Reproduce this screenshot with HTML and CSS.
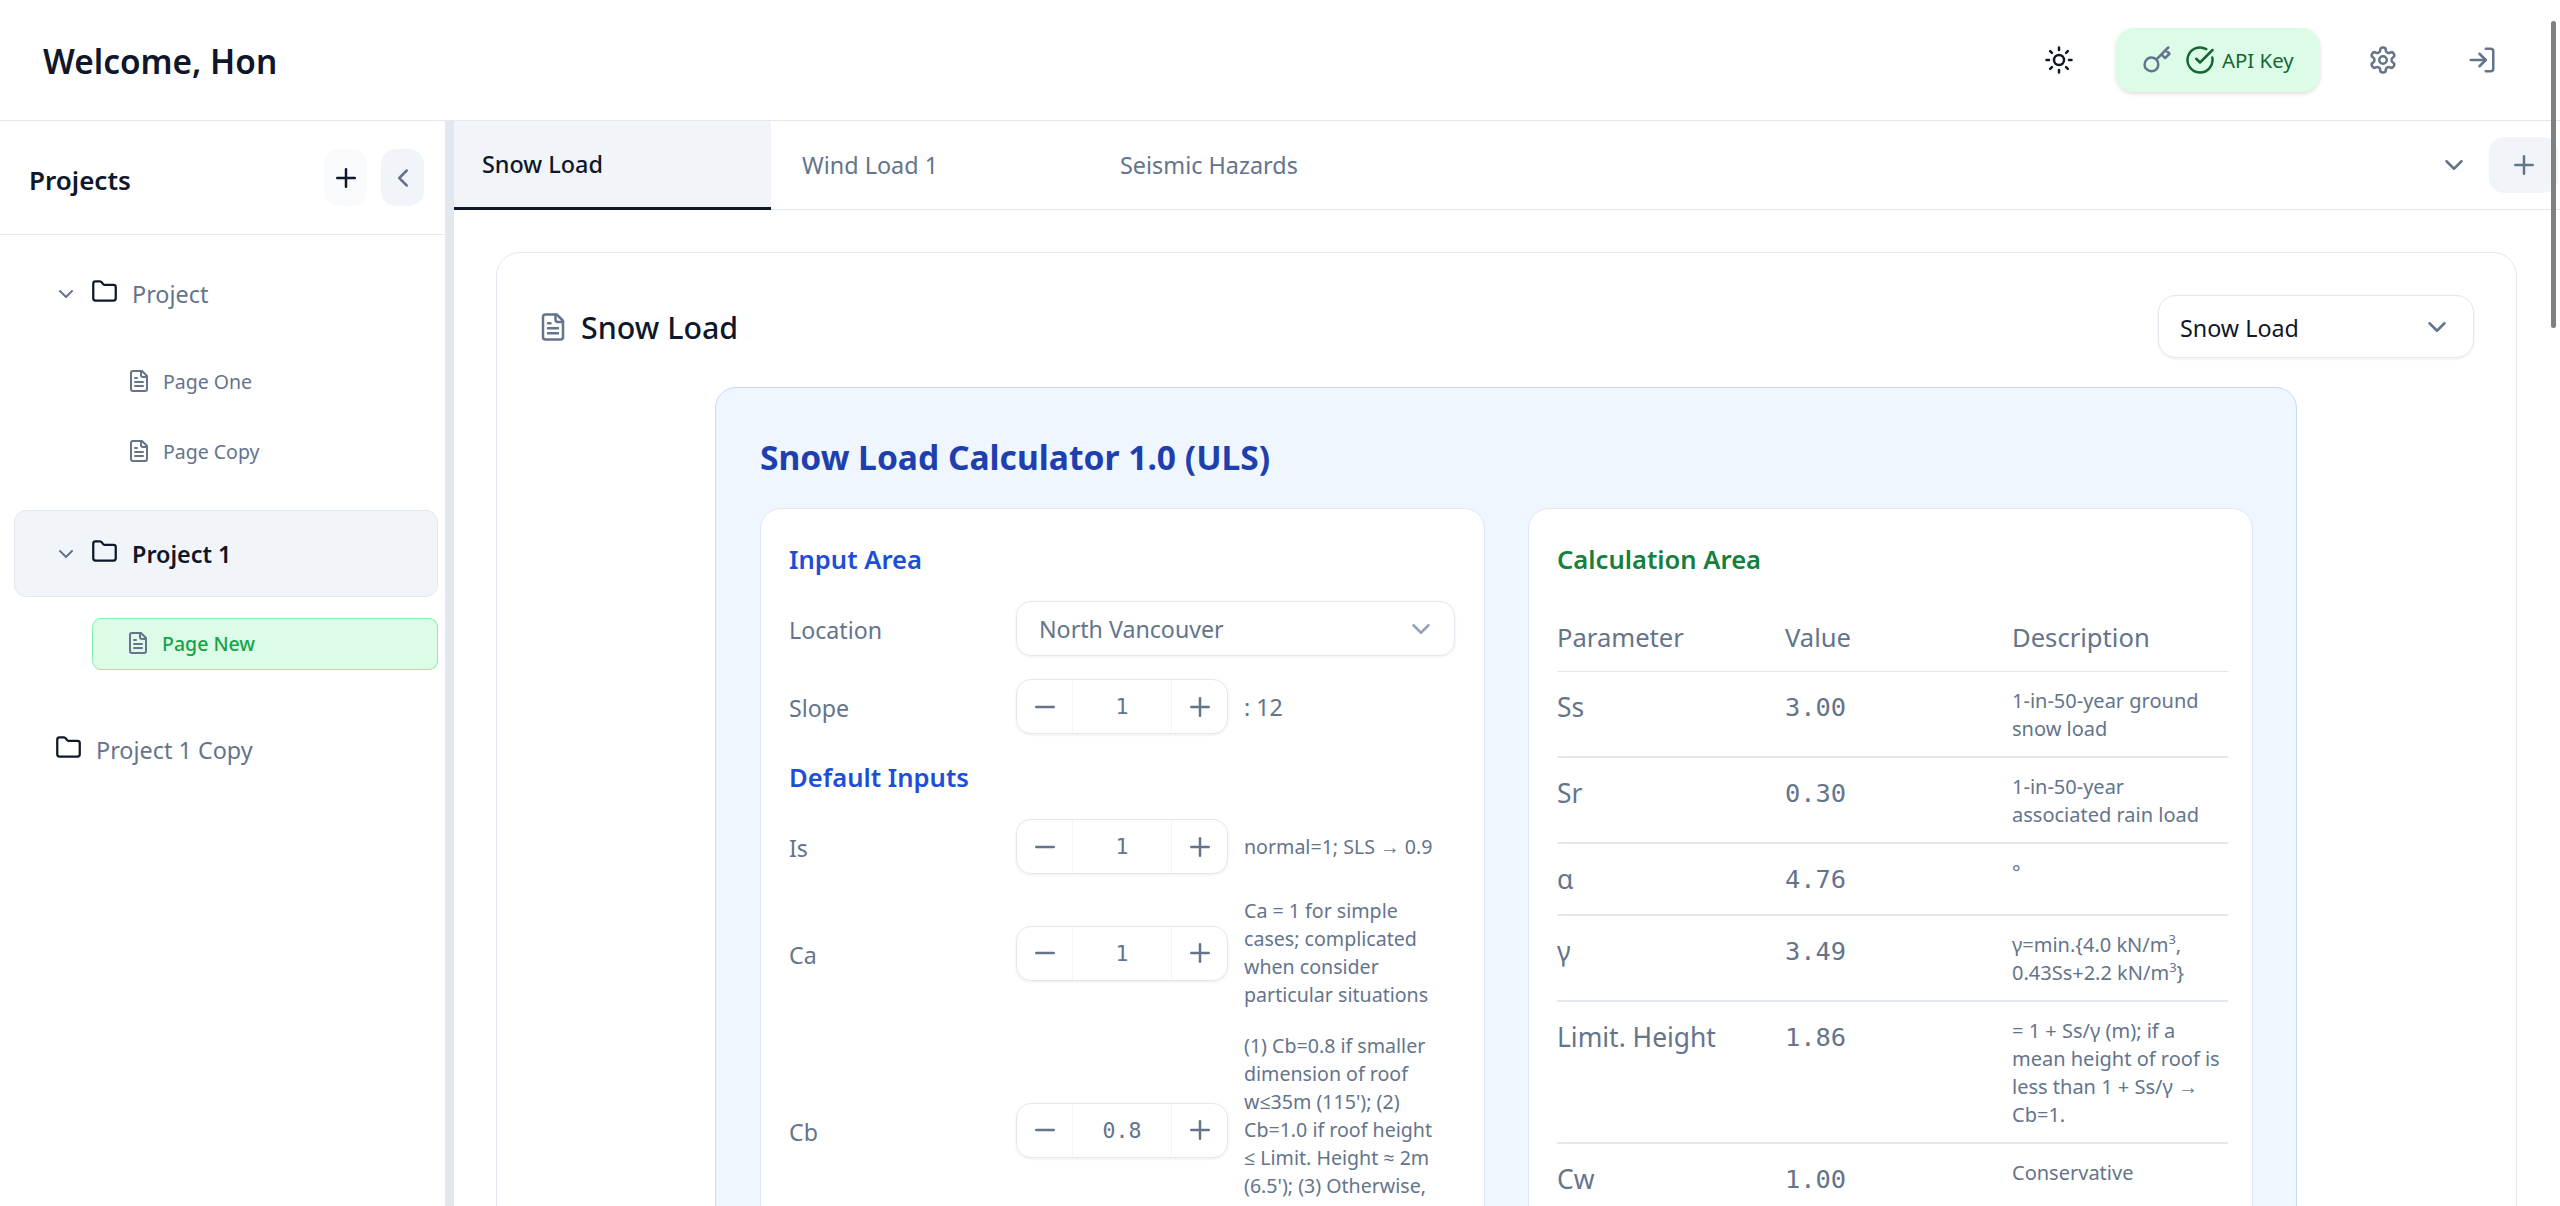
FILE: index.html
```html
<!DOCTYPE html>
<html lang="en">
<head>
    <meta charset="UTF-8">
    <meta name="viewport" content="width=device-width, initial-scale=1.0">
    <title>Snow Load</title>
    <link rel="stylesheet" href="styles.css">
</head>
<body>
    <svg class="sprite" xmlns="http://www.w3.org/2000/svg">
        <symbol id="i-sun" viewBox="0 0 24 24"><circle cx="12" cy="12" r="4"/><path d="M12 2v2M12 20v2M4.93 4.93l1.41 1.41M17.66 17.66l1.41 1.41M2 12h2M20 12h2M6.34 17.66l-1.41 1.41M19.07 4.93l-1.41 1.41"/></symbol>
        <symbol id="i-key" viewBox="0 0 24 24"><path d="m21 2-2 2m-7.61 7.61a5.5 5.5 0 1 1-7.778 7.778 5.5 5.5 0 0 1 7.777-7.777zm0 0L15.5 7.5m0 0 3 3L22 7l-3-3m-3.5 3.5L19 4"/></symbol>
        <symbol id="i-check" viewBox="0 0 24 24"><path d="M21.801 10A10 10 0 1 1 17 3.335"/><path d="m9 11 3 3L22 4"/></symbol>
        <symbol id="i-gear" viewBox="0 0 24 24"><path d="M12.22 2h-.44a2 2 0 0 0-2 2v.18a2 2 0 0 1-1 1.73l-.43.25a2 2 0 0 1-2 0l-.15-.08a2 2 0 0 0-2.73.73l-.22.38a2 2 0 0 0 .73 2.73l.15.1a2 2 0 0 1 1 1.72v.51a2 2 0 0 1-1 1.74l-.15.09a2 2 0 0 0-.73 2.73l.22.38a2 2 0 0 0 2.73.73l.15-.08a2 2 0 0 1 2 0l.43.25a2 2 0 0 1 1 1.73V20a2 2 0 0 0 2 2h.44a2 2 0 0 0 2-2v-.18a2 2 0 0 1 1-1.73l.43-.25a2 2 0 0 1 2 0l.15.08a2 2 0 0 0 2.73-.73l.22-.39a2 2 0 0 0-.73-2.73l-.15-.08a2 2 0 0 1-1-1.74v-.5a2 2 0 0 1 1-1.74l.15-.09a2 2 0 0 0 .73-2.73l-.22-.38a2 2 0 0 0-2.73-.73l-.15.08a2 2 0 0 1-2 0l-.43-.25a2 2 0 0 1-1-1.73V4a2 2 0 0 0-2-2z"/><circle cx="12" cy="12" r="3"/></symbol>
        <symbol id="i-login" viewBox="0 0 24 24"><path d="M15 3h4a2 2 0 0 1 2 2v14a2 2 0 0 1-2 2h-4"/><path d="m10 17 5-5-5-5"/><path d="M15 12H3"/></symbol>
        <symbol id="i-down" viewBox="0 0 24 24"><path d="m6 9 6 6 6-6"/></symbol>
        <symbol id="i-left" viewBox="0 0 24 24"><path d="m15 18-6-6 6-6"/></symbol>
        <symbol id="i-plus" viewBox="0 0 24 24"><path d="M5 12h14M12 5v14"/></symbol>
        <symbol id="i-minus" viewBox="0 0 24 24"><path d="M5 12h14"/></symbol>
        <symbol id="i-folder" viewBox="0 0 24 24"><path d="M20 20a2 2 0 0 0 2-2V8a2 2 0 0 0-2-2h-7.9a2 2 0 0 1-1.69-.9L9.6 3.9A2 2 0 0 0 7.93 3H4a2 2 0 0 0-2 2v13a2 2 0 0 0 2 2Z"/></symbol>
        <symbol id="i-file" viewBox="0 0 24 24"><path d="M15 2H6a2 2 0 0 0-2 2v16a2 2 0 0 0 2 2h12a2 2 0 0 0 2-2V7Z"/><path d="M14 2v4a2 2 0 0 0 2 2h4"/><path d="M10 9H8M16 13H8M16 17H8"/></symbol>
    </svg>

    <header class="topbar">
        <h1 class="welcome">Welcome, Hon</h1>
        <div class="top-actions">
            <button class="top-btn top-btn-sun"><svg class="icon icon-dark"><use href="#i-sun"/></svg></button>
            <button class="api-btn">
                <svg class="icon icon-grey"><use href="#i-key"/></svg>
                <svg class="icon icon-green"><use href="#i-check"/></svg>
                <span>API Key</span>
            </button>
            <button class="top-btn top-btn-gear"><svg class="icon icon-grey"><use href="#i-gear"/></svg></button>
            <button class="top-btn top-btn-login"><svg class="icon icon-grey"><use href="#i-login"/></svg></button>
        </div>
    </header>

    <div class="layout">
        <aside class="sidebar">
            <div class="side-head">
                <h2 class="side-title">Projects</h2>
                <button class="square-btn square-add"><svg class="icon icon-dark"><use href="#i-plus"/></svg></button>
                <button class="square-btn square-back"><svg class="icon icon-grey"><use href="#i-left"/></svg></button>
            </div>
            <nav class="tree">
                <div class="project">
                    <svg class="chevron"><use href="#i-down"/></svg>
                    <svg class="folder"><use href="#i-folder"/></svg>
                    <span>Project</span>
                </div>
                <div class="page"><svg class="page-icon icon-grey"><use href="#i-file"/></svg><span>Page One</span></div>
                <div class="page"><svg class="page-icon icon-grey"><use href="#i-file"/></svg><span>Page Copy</span></div>
                <div class="project project-open">
                    <svg class="chevron"><use href="#i-down"/></svg>
                    <svg class="folder"><use href="#i-folder"/></svg>
                    <span>Project 1</span>
                </div>
                <div class="page page-active"><svg class="page-icon icon-grey"><use href="#i-file"/></svg><span>Page New</span></div>
                <div class="project project-closed">
                    <svg class="folder"><use href="#i-folder"/></svg>
                    <span>Project 1 Copy</span>
                </div>
            </nav>
        </aside>
        <div class="resizer"></div>

        <main class="main">
            <div class="tabs">
                <div class="tab tab-active">Snow Load</div>
                <div class="tab">Wind Load 1</div>
                <div class="tab">Seismic Hazards</div>
                <svg class="icon icon-grey tabs-more"><use href="#i-down"/></svg>
                <button class="tab-add"><svg class="icon icon-grey"><use href="#i-plus"/></svg></button>
            </div>

            <div class="content">
                <section class="sheet">
                    <div class="sheet-head">
                        <svg class="sheet-icon icon-grey"><use href="#i-file"/></svg>
                        <h2 class="sheet-title">Snow Load</h2>
                        <div class="sheet-select">
                            <span>Snow Load</span>
                            <svg class="icon icon-grey"><use href="#i-down"/></svg>
                        </div>
                    </div>

                    <div class="calc">
                        <h3 class="calc-title">Snow Load Calculator 1.0 (ULS)</h3>
                        <div class="calc-grid">
                            <div class="pane">
                                <h4 class="pane-title">Input Area</h4>
                                <div class="field">
                                    <label class="field-label">Location</label>
                                    <div class="location">
                                        <span>North Vancouver</span>
                                        <svg class="icon location-chevron"><use href="#i-down"/></svg>
                                    </div>
                                </div>
                                <div class="field">
                                    <label class="field-label">Slope</label>
                                    <div class="stepper">
                                        <button><svg class="icon icon-grey"><use href="#i-minus"/></svg></button>
                                        <span class="stepper-value">1</span>
                                        <button><svg class="icon icon-grey"><use href="#i-plus"/></svg></button>
                                    </div>
                                    <span class="suffix">: 12</span>
                                </div>
                                <h4 class="pane-title pane-title-sub">Default Inputs</h4>
                                <div class="field">
                                    <label class="field-label">Is</label>
                                    <div class="stepper">
                                        <button><svg class="icon icon-grey"><use href="#i-minus"/></svg></button>
                                        <span class="stepper-value">1</span>
                                        <button><svg class="icon icon-grey"><use href="#i-plus"/></svg></button>
                                    </div>
                                    <p class="note">normal=1; SLS → 0.9</p>
                                </div>
                                <div class="field">
                                    <label class="field-label">Ca</label>
                                    <div class="stepper">
                                        <button><svg class="icon icon-grey"><use href="#i-minus"/></svg></button>
                                        <span class="stepper-value">1</span>
                                        <button><svg class="icon icon-grey"><use href="#i-plus"/></svg></button>
                                    </div>
                                    <p class="note">Ca = 1 for simple<br>cases; complicated<br>when consider<br>particular situations</p>
                                </div>
                                <div class="field">
                                    <label class="field-label">Cb</label>
                                    <div class="stepper">
                                        <button><svg class="icon icon-grey"><use href="#i-minus"/></svg></button>
                                        <span class="stepper-value">0.8</span>
                                        <button><svg class="icon icon-grey"><use href="#i-plus"/></svg></button>
                                    </div>
                                    <p class="note note-long">(1) Cb=0.8 if smaller<br>dimension of roof<br>w≤35m (115'); (2)<br>Cb=1.0 if roof height<br>≤ Limit. Height ≈ 2m<br>(6.5'); (3) Otherwise,</p>
                                </div>
                            </div>

                            <div class="pane pane-results">
                                <h4 class="pane-title pane-title-green">Calculation Area</h4>
                                <table class="results">
                                    <thead>
                                        <tr><th>Parameter</th><th>Value</th><th>Description</th></tr>
                                    </thead>
                                    <tbody>
                                        <tr><td>Ss</td><td class="num">3.00</td><td class="desc">1-in-50-year ground<br>snow load</td></tr>
                                        <tr><td>Sr</td><td class="num">0.30</td><td class="desc">1-in-50-year<br>associated rain load</td></tr>
                                        <tr><td>α</td><td class="num">4.76</td><td class="desc">°</td></tr>
                                        <tr><td>γ</td><td class="num">3.49</td><td class="desc">γ=min.{4.0 kN/m<sup>3</sup>,<br>0.43Ss+2.2 kN/m<sup>3</sup>}</td></tr>
                                        <tr><td>Limit. Height</td><td class="num">1.86</td><td class="desc">= 1 + Ss/γ (m); if a<br>mean height of roof is<br>less than 1 + Ss/γ →<br>Cb=1.</td></tr>
                                        <tr><td>Cw</td><td class="num">1.00</td><td class="desc">Conservative</td></tr>
                                    </tbody>
                                </table>
                            </div>
                        </div>
                    </div>
                </section>
            </div>
        </main>
    </div>

    <div class="scroll-thumb"></div>
</body>
</html>
```

FILE: styles.css
```css
* {
    box-sizing: border-box;
}

html, body {
    height: 100%;
}

body {
    margin: 0;
    overflow: hidden;
    background: #fff;
    color: #0f172a;
    font-family: "Noto Sans", "Open Sans", sans-serif;
}

button {
    padding: 0;
    border: 0;
    background: none;
    font: inherit;
    display: flex;
    align-items: center;
    justify-content: center;
}

h1, h2, h3, h4, p {
    margin: 0;
}

.sprite {
    display: none;
}

svg {
    fill: none;
    stroke: currentColor;
    stroke-width: 2;
    stroke-linecap: round;
    stroke-linejoin: round;
    flex-shrink: 0;
}

.icon {
    width: 30px;
    height: 30px;
}

.icon-dark {
    color: #0f172a;
}

.icon-grey {
    color: #64748b;
}

.icon-green {
    color: #166534;
}

/* top bar */
.topbar {
    height: 121px;
    border-bottom: 1px solid #e2e8f0;
    display: flex;
    align-items: center;
    justify-content: space-between;
    padding: 0 46px 0 43px;
}

.welcome {
    font-size: 33.4px;
    font-weight: 600;
    line-height: 1;
    margin-top: 3px;
}

.top-actions {
    display: flex;
    align-items: center;
}

.top-btn {
    width: 64px;
    height: 64px;
}

.top-btn-gear {
    margin-left: 31px;
}

.top-btn-login {
    margin-left: 35px;
}

.api-btn {
    width: 204px;
    height: 64px;
    margin-left: 25px;
    border-radius: 18px;
    background: #dcfce7;
    box-shadow: 0 2px 4px rgba(0, 0, 0, .12);
    color: #166534;
    font-size: 20.4px;
    gap: 13px;
    justify-content: flex-start;
    padding-left: 26px;
}

.api-btn span {
    margin-left: -6px;
}

/* sidebar */
.layout {
    display: flex;
    height: calc(100vh - 121px);
}

.sidebar {
    width: 445px;
    flex-shrink: 0;
}

.resizer {
    width: 9px;
    flex-shrink: 0;
    background: #e2e8f0;
}

.side-head {
    height: 114px;
    border-bottom: 1px solid #e2e8f0;
    display: flex;
    align-items: center;
    padding: 0 21px 0 29px;
}

.side-title {
    font-size: 26px;
    font-weight: 600;
    margin: 5px auto 0 0;
}

.square-btn {
    width: 43px;
    height: 57px;
    border-radius: 15px;
}

.square-add {
    background: #f8fafc;
    margin-right: 14px;
}

.square-back {
    background: #f1f5f9;
}

.tree {
    padding: 15px 7px 0 14px;
    color: #64748b;
}

.project {
    height: 87px;
    display: flex;
    align-items: center;
    padding-left: 40px;
    font-size: 23.4px;
}

.project span {
    margin-left: 14px;
}

.chevron {
    width: 24px;
    height: 24px;
    margin-right: 13px;
    color: #64748b;
}

.folder {
    width: 27px;
    height: 27px;
    color: #0f172a;
    margin-top: -4px;
}

.project-open {
    margin-top: 32px;
    background: #f1f5f9;
    border: 1px solid #e2e8f0;
    border-radius: 12px;
    padding-left: 39px;
    color: #0f172a;
    font-weight: 600;
}

.project-closed {
    margin-top: 36px;
    padding-left: 41px;
}

.page {
    height: 52px;
    margin: 19px 0 18px 78px;
    display: flex;
    align-items: center;
    gap: 12px;
    padding-left: 34px;
    font-size: 19.5px;
    border: 1px solid transparent;
    border-radius: 9px;
}

.page span {
    margin-top: -1px;
}

.page-icon {
    width: 24px;
    height: 24px;
    margin-top: -3px;
}

.page + .page {
    margin-top: 0;
    margin-bottom: 0;
}

.page-active {
    margin: 21px 0 0 78px;
    padding-left: 33px;
    background: #dcfce7;
    border-color: #86efac;
    color: #16a34a;
    font-weight: 500;
}

/* tabs */
.main {
    flex: 1;
    min-width: 0;
    overflow: hidden;
}

.tabs {
    height: 89px;
    border-bottom: 1px solid #e2e8f0;
    display: flex;
    align-items: stretch;
}

.tab {
    width: 318px;
    display: flex;
    align-items: center;
    padding-left: 31px;
    color: #64748b;
    font-size: 23.4px;
}

.tab-active {
    width: 317px;
    padding-left: 28px;
    background: #f1f5f9;
    border-bottom: 3px solid #0f172a;
    margin-bottom: -1px;
    color: #0f172a;
    font-weight: 500;
}

.tabs-more {
    align-self: center;
    margin-left: auto;
}

.tab-add {
    align-self: center;
    width: 69px;
    height: 56px;
    margin: 0 2px 0 20px;
    border-radius: 15px;
    background: #f1f5f9;
}

/* sheet */
.content {
    padding: 42px 43px 0 42px;
}

.sheet {
    border: 1px solid #e2e8f0;
    border-radius: 24px;
    padding: 42px 42px 40px 41px;
}

.sheet-head {
    display: flex;
    align-items: center;
    height: 63px;
    margin-bottom: 29px;
}

.sheet-icon {
    width: 30px;
    height: 30px;
}

.sheet-title {
    margin: 2px 0 0 13px;
    font-size: 30.4px;
    font-weight: 500;
}

.sheet-select {
    margin-left: auto;
    width: 316px;
    height: 63px;
    border: 1px solid #e2e8f0;
    border-radius: 18px;
    box-shadow: 0 1px 3px rgba(0, 0, 0, .08);
    display: flex;
    align-items: center;
    justify-content: space-between;
    padding: 0 21px 0 21px;
    font-size: 23.3px;
}

.sheet-select span {
    margin-top: 2px;
}

.calc {
    width: 1582px;
    margin: 0 auto;
    background: #eff6ff;
    border: 1px solid #bfdbfe;
    border-radius: 21px;
    padding: 44px 43px 40px 44px;
}

.calc-title {
    color: #1e40af;
    font-size: 33.6px;
    font-weight: 700;
    line-height: 50px;
    margin-bottom: 26px;
}

.calc-grid {
    display: grid;
    grid-template-columns: 1fr 1fr;
    gap: 43px;
}

.pane {
    background: #fff;
    border: 1px solid #e2e8f0;
    border-radius: 21px;
    padding: 31px 29px 32px 28px;
}

.pane-results {
    padding-right: 24px;
}

.pane-title {
    color: #1d4ed8;
    font-size: 25.6px;
    font-weight: 600;
    line-height: 40px;
    margin-bottom: 21px;
}

.pane-title-sub {
    margin-top: 24px;
}

.pane-title-green {
    color: #15803d;
}

.field {
    display: flex;
    align-items: center;
    margin-bottom: 23px;
    color: #64748b;
    font-size: 23.2px;
}

.field-label {
    width: 227px;
    flex-shrink: 0;
    padding-top: 3px;
}

.location {
    flex: 1;
    height: 55px;
    border: 1px solid #e2e8f0;
    border-radius: 15px;
    box-shadow: 0 1px 3px rgba(0, 0, 0, .08);
    display: flex;
    align-items: center;
    justify-content: space-between;
    padding: 0 18px 0 22px;
}

.location-chevron {
    color: #94a3b8;
}

.stepper {
    width: 212px;
    height: 55px;
    flex-shrink: 0;
    display: flex;
    border: 1px solid #e2e8f0;
    border-radius: 15px;
    box-shadow: 0 1px 3px rgba(0, 0, 0, .08);
}

.stepper button {
    width: 55px;
}

.stepper-value {
    flex: 1;
    display: flex;
    align-items: center;
    justify-content: center;
    border-left: 1px solid #f1f5f9;
    border-right: 1px solid #f1f5f9;
    font-family: "DejaVu Sans Mono", monospace;
    font-size: 21.5px;
    color: #64748b;
}

.suffix {
    margin-left: 16px;
}

.note {
    margin-left: 16px;
    font-size: 19.6px;
    line-height: 28px;
    white-space: nowrap;
}

/* the note runs on below the fold, keep the stepper at its middle */
.note-long {
    padding-bottom: 28px;
}

/* results table */
.results {
    width: 100%;
    margin-top: 25px;
    border-collapse: collapse;
    table-layout: fixed;
    color: #64748b;
    font-size: 26.4px;
}

.results th {
    height: 66px;
    text-align: left;
    font-weight: 400;
    font-size: 25.6px;
    border-bottom: 1px solid #e2e8f0;
    padding: 0;
}

.results th:first-child,
.results td:first-child {
    width: 228px;
}

.results th:nth-child(2),
.results td:nth-child(2) {
    width: 227px;
}

.results td {
    vertical-align: top;
    padding: 15px 0;
    line-height: 40px;
    border-bottom: 2px solid #e2e8f0;
}

.results .num {
    font-family: "DejaVu Sans Mono", monospace;
    font-size: 25.4px;
}

.results .desc {
    padding: 15px 0 13px;
    font-size: 20px;
    line-height: 28px;
    white-space: nowrap;
}

.results sup {
    font-size: 13px;
    line-height: 0;
}

.scroll-thumb {
    position: absolute;
    top: 21px;
    right: 4px;
    width: 5px;
    height: 307px;
    border-radius: 3px;
    background: #808080;
}
```
